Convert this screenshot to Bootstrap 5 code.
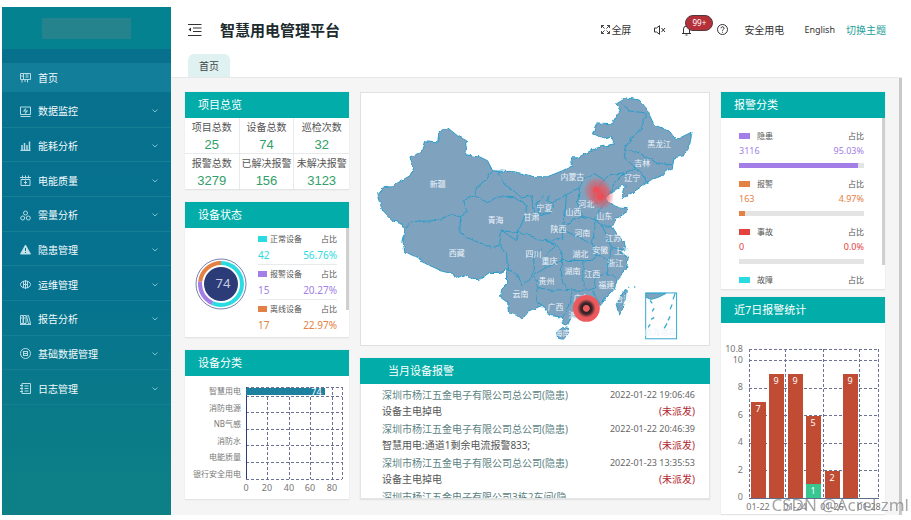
<!DOCTYPE html>
<html lang="zh-CN">
<head>
<meta charset="utf-8">
<meta name="viewport" content="width=device-width, initial-scale=1">
<title>智慧用电管理平台</title>
<link href="https://cdn.jsdelivr.net/npm/bootstrap@5.3.0/dist/css/bootstrap.min.css" rel="stylesheet">
<style>
:root{--teal:#02ada9;--cyan:#2bdbe2;--violet:#a27ee6;--orange:#e38043;--red:#e54141}
body{font-family:"Noto Sans","Noto Sans CJK SC",sans-serif;font-size:10px;line-height:16px;color:#555;background:#fff}
.shell{margin:7px 9px 6px 2px;min-height:calc(100vh - 13px)}
.side{flex:0 0 169px;background:linear-gradient(#07708d 0,#06728f 55%,#0a7b88 82%,#0d8186 100%)}
.brand-box{height:42px;background:#05828f}
.brand-plate{width:89px;height:21px;background:#25838d}
.side a{color:#f2fbfd;text-decoration:none;padding:0 13px 0 18px;gap:7px}
.side .home-link{height:29px;margin-top:14px;background:#137e99}
.menu{height:312px;display:grid;grid-auto-rows:1fr;margin:1px 0 0;padding:0;list-style:none}
.menu li{border-bottom:1px solid #167f96}
.side .menu a{padding-top:3px}
.side .ico{width:11px;height:11px;stroke:#b5dbe4;fill:none;stroke-width:1;flex:none}
.side .chev{width:6px;height:6px;stroke:#7fc0d0;fill:none;margin-left:auto}
.topbar{height:47px;padding:0 16px 2px 17px}
.topbar h1{font-size:15px;line-height:20px;font-weight:700;color:#1c2b2e;margin:0 0 0 18px}
.topbar .tool{background:none;border:0;padding:0;color:#333;font-size:10px;line-height:16px;text-decoration:none;display:inline-flex;align-items:center}
.topbar svg{stroke:#333;fill:none;stroke-width:1}
.topbar .full svg{margin-right:1px}
.topbar .mute{margin-left:23px}
.topbar .help{margin-left:26px}
.topbar .en{font-size:9px}
.topbar .theme-link{color:#1c9e98;margin-left:11px}
.count{position:absolute;left:3px;top:-9px;width:28px;height:16px;border:1px solid #55383c;border-radius:8px;background:#b5313a;color:#fff;font-size:8px;line-height:13px;text-align:center}
.tabs-line{height:24px;padding-left:17px;border-bottom:1px solid #e7e9e9}
.tab-home{width:42px;background:#dff1f1;border-radius:6px 6px 0 0;color:#444;text-decoration:none}
.board{background:#f5f5f5;padding:14px 14px 0 14px;gap:11px;border-right:3px solid #c9c9c9}
.side-col{flex:0 0 164px}
.left-col{gap:12px}
.right-col{gap:7px}
.mid-col{min-width:0}
.panel{background:#fff;border-bottom:1px solid #e3e5e5;box-shadow:0 0 1px #d8dcdc}
.panel h2{background:var(--teal);color:#fff;font-size:11px;line-height:26px;font-weight:400;margin:0;padding-left:13px}
.panel .wide-head{padding-left:28px}
.panel svg,.map-box svg{display:block;width:100%}
.stats>div{border-right:1px solid #e6eaea}
.stats>div:nth-child(3n){border-right:0}
.stats>div:nth-child(-n+3){border-bottom:1px solid #e6eaea}
.stats span{display:block;line-height:18px;white-space:nowrap}
.stats b{display:block;font:400 13px/17px "Liberation Sans",sans-serif;color:#31a069}
.status-body{height:109px;padding:2px 12px 0 10px}
.donut{flex:0 0 52px}
.legend-list{flex:1;margin-left:11px}
.legend-list>div{border-bottom:1px solid #e8ebeb;height:35px}
.legend-list>div:last-child{border:0}
.cap{font-size:8px;line-height:17px}
.num{font-size:10px;line-height:17px}
.chip{width:9px;height:6px;margin-right:3px}
.thumb{position:absolute;right:0;top:0;width:3px;background:#cfcfcf}
.c-cyan{color:var(--cyan)}.c-violet{color:var(--violet)}.c-orange{color:var(--orange)}.c-red{color:var(--red)}
.b-cyan{background:var(--cyan)}.b-violet{background:var(--violet)}.b-orange{background:var(--orange)}.b-red{background:var(--red)}
.kinds{height:171px;padding:11px 21px 0 18px}
.kinds .cap{line-height:14px}
.kinds .num{font-size:9px;line-height:16px}
.kinds .chip{width:11px;margin-right:7px}
.kinds .progress{height:5px;margin:4px 0 9px;border-radius:0;background:#e4e4e4}
.kinds-thumb{height:147px}
.map-box{background:#fff;border:1px solid #dfe1e1;margin-bottom:12px}
.alarms{height:115px;padding:3px 14px 0 21px;border:1px solid #e3e5e5;border-top:0}
.alarms>div{height:32px;margin-bottom:2px}
.alarms a{color:#5c8383;text-decoration:none}
.alarms time{font-size:9px;color:#666}
.alarms em{font-style:normal;color:#b3262f}
.axis text{font-size:9px;fill:#777}
.axis .zh text{font-size:8px}
.axis .vals text,.axis .bar-val{fill:#fff}
.grid-lines{stroke:#6d7193;stroke-width:1;stroke-dasharray:3 2;fill:none}
.names text{font-size:8px;fill:#eef4fa;text-anchor:middle}
.wm{position:absolute;right:2px;bottom:5px;font-size:17px;line-height:22px;color:#777;opacity:.65;white-space:nowrap}
</style>
</head>
<body>
<div class="position-relative overflow-hidden">
<div class="shell d-flex">
<nav class="side" aria-label="主菜单">
  <div class="brand-box d-flex align-items-center justify-content-center"><div class="brand-plate"></div></div>
  <a class="home-link d-flex align-items-center" href="#"><svg class="ico" viewBox="0 0 11 11"><path d="M.5 1.500h10v6H.5zM3.500 1.500v6M5.500 3h3M5.500 5h3M2 7.500v3M5 8v2M7.500 7.500v3M1 4h2"/></svg>首页</a>
  <ul class="menu">
    <li class="d-flex"><a class="d-flex flex-fill align-items-center" href="#"><svg class="ico" viewBox="0 0 11 11"><path d="M.5 1h10v7.500H.5zM.5 10.500h10"/><path d="M6 2.500 4 5h3L5 7.500" stroke-width="1.200"/></svg>数据监控<svg class="chev" viewBox="0 0 6 6"><path d="M.5 1.500 3 4l2.500-2.500"/></svg></a></li>
    <li class="d-flex"><a class="d-flex flex-fill align-items-center" href="#"><svg class="ico" viewBox="0 0 11 11"><path d="M.5 10.500h10M2 10V5M4.500 10V3M7 10V5M9.500 10V1.500" stroke-width="1.500"/></svg>能耗分析<svg class="chev" viewBox="0 0 6 6"><path d="M.5 1.500 3 4l2.500-2.500"/></svg></a></li>
    <li class="d-flex"><a class="d-flex flex-fill align-items-center" href="#"><svg class="ico" viewBox="0 0 11 11"><path d="M1 4.500h9v6H1zM0 2.500h11M2.500.5v3M5.500.5v3M8.500.5v3M5.500 5.500v4M4 7.500h3"/></svg>电能质量<svg class="chev" viewBox="0 0 6 6"><path d="M.5 1.500 3 4l2.500-2.500"/></svg></a></li>
    <li class="d-flex"><a class="d-flex flex-fill align-items-center" href="#"><svg class="ico" viewBox="0 0 11 11"><circle cx="5.500" cy="3" r="2"/><circle cx="2.700" cy="8" r="2"/><circle cx="8.300" cy="8" r="2"/></svg>需量分析<svg class="chev" viewBox="0 0 6 6"><path d="M.5 1.500 3 4l2.500-2.500"/></svg></a></li>
    <li class="d-flex"><a class="d-flex flex-fill align-items-center" href="#"><svg class="ico" viewBox="0 0 11 11"><path d="M5.500 1 10.500 10H.5z" fill="#c8e4ea"/><path d="M5.500 4v3M5.500 8v1" stroke="#07708d"/></svg>隐患管理<svg class="chev" viewBox="0 0 6 6"><path d="M.5 1.500 3 4l2.500-2.500"/></svg></a></li>
    <li class="d-flex"><a class="d-flex flex-fill align-items-center" href="#"><svg class="ico" viewBox="0 0 11 11"><ellipse cx="5.500" cy="5.500" rx="5" ry="3.500"/><path d="M5.500 1v9M3.500 2v7M7.500 2v7M3 5.500h5"/></svg>运维管理<svg class="chev" viewBox="0 0 6 6"><path d="M.5 1.500 3 4l2.500-2.500"/></svg></a></li>
    <li class="d-flex"><a class="d-flex flex-fill align-items-center" href="#"><svg class="ico" viewBox="0 0 11 11"><path d="M.5 1.500h2.500v8H.5zM3.500 1.500H6v8H3.500zM6.500 2l2-.5 2 8-2 .5zM0 10.500h11M1 4h1M4 4h1"/></svg>报告分析<svg class="chev" viewBox="0 0 6 6"><path d="M.5 1.500 3 4l2.500-2.500"/></svg></a></li>
    <li class="d-flex"><a class="d-flex flex-fill align-items-center" href="#"><svg class="ico" viewBox="0 0 11 11"><circle cx="5.500" cy="5.500" r="5"/><path d="M3 3.500h5M3.500 5.500h4M3.500 7.500h4M3.500 3v5M7.500 3v5"/></svg>基础数据管理<svg class="chev" viewBox="0 0 6 6"><path d="M.5 1.500 3 4l2.500-2.500"/></svg></a></li>
    <li class="d-flex"><a class="d-flex flex-fill align-items-center" href="#"><svg class="ico" viewBox="0 0 11 11"><path d="M2 .5h8.500v10H2zM0 2.500h3M0 5.500h3M0 8.500h3M4.500 3h4M4.500 5.500h4M4.500 8h4"/></svg>日志管理<svg class="chev" viewBox="0 0 6 6"><path d="M.5 1.500 3 4l2.500-2.500"/></svg></a></li>
  </ul>
</nav>

<div class="d-flex flex-column flex-fill">
<header>
  <div class="topbar d-flex align-items-center">
    <button class="tool" aria-label="收起菜单"><svg width="14" height="12" viewBox="0 0 14 12"><path d="M0 .5h13.500M5 4h8.500M5 7.500h8.500M0 11.500h13.500" stroke-width="1.200"/><path d="M3 3.500v4L.5 5.500z" fill="#333" stroke="none"/></svg></button>
    <h1>智慧用电管理平台</h1>
    <div class="ms-auto d-flex align-items-center">
      <button class="tool full"><svg width="9" height="9" viewBox="0 0 9 9"><path d="M.5 3V.5H3M.5.5l3 3M6 .5h2.500V3M8.500.5l-3 3M.5 6v2.500H3M.5 8.500l3-3M8.500 6v2.500H6M8.500 8.500l-3-3" stroke-width=".9"/></svg>全屏</button>
      <button class="tool mute" aria-label="静音"><svg width="12" height="10" viewBox="0 0 12 10"><path d="M.5 3h2L5.500.7v8.600L2.500 7h-2zM7.500 3l3.500 4M11 3 7.500 7"/></svg></button>
      <button class="tool position-relative ms-3" aria-label="通知"><svg width="9" height="12" viewBox="0 0 9 12"><path d="M0 9.500h9M1.500 9.500V5a3 3 0 0 1 6 0v4.500M3.500 11h2M4.500 2V1"/></svg><span class="count">99+</span></button>
      <button class="tool help" aria-label="帮助"><svg width="11" height="11" viewBox="0 0 11 11"><circle cx="5.500" cy="5.500" r="5"/><path d="M4 4.300a1.500 1.500 0 1 1 2.200 1.300q-.7.300-.7 1.200M5.500 7.800v.9"/></svg></button>
      <a class="tool ms-3" href="#">安全用电</a>
      <a class="tool ms-3 ps-1 en" href="#">English</a>
      <a class="tool theme-link" href="#">切换主题</a>
    </div>
  </div>
  <div class="tabs-line d-flex"><a class="tab-home d-flex align-items-center justify-content-center" href="#">首页</a></div>
</header>

<main class="board d-flex flex-fill">
  <div class="side-col left-col d-flex flex-column">
    <section class="panel">
      <h2>项目总览</h2>
      <div class="stats row row-cols-3 g-0 text-center">
        <div><span>项目总数</span><b>25</b></div><div><span>设备总数</span><b>74</b></div><div><span>巡检次数</span><b>32</b></div>
        <div><span>报警总数</span><b>3279</b></div><div><span>已解决报警</span><b>156</b></div><div><span>未解决报警</span><b>3123</b></div>
      </div>
    </section>
    <section class="panel">
      <h2>设备状态</h2>
      <div class="status-body position-relative d-flex align-items-start">
        <div class="donut align-self-center"><svg viewBox="0 0 52 52">
          <circle cx="26" cy="26" r="25" fill="none" stroke="#7780b0" stroke-width="1"/>
          <g fill="none" stroke-width="4" transform="rotate(-90 26 26)">
            <circle cx="26" cy="26" r="21" pathLength="100" stroke="#2bdbe2" stroke-dasharray="56.760 100"/>
            <circle cx="26" cy="26" r="21" pathLength="100" stroke="#a27ee6" stroke-dasharray="20.270 100" stroke-dashoffset="-56.760"/>
            <circle cx="26" cy="26" r="21" pathLength="100" stroke="#e38043" stroke-dasharray="22.970 100" stroke-dashoffset="-77.030"/>
          </g>
          <circle cx="26" cy="26" r="17" fill="#2c3c78"/>
          <text x="28" y="30" font-size="13" fill="#c6cce2" text-anchor="middle">74</text></svg></div>
        <div class="legend-list">
          <div><div class="cap d-flex align-items-center"><i class="chip b-cyan"></i>正常设备<span class="ms-auto">占比</span></div><div class="num c-cyan d-flex justify-content-between"><span>42</span><span>56.76%</span></div></div>
          <div><div class="cap d-flex align-items-center"><i class="chip b-violet"></i>报警设备<span class="ms-auto">占比</span></div><div class="num c-violet d-flex justify-content-between"><span>15</span><span>20.27%</span></div></div>
          <div><div class="cap d-flex align-items-center"><i class="chip b-orange"></i>离线设备<span class="ms-auto">占比</span></div><div class="num c-orange d-flex justify-content-between"><span>17</span><span>22.97%</span></div></div>
        </div>
        <span class="thumb h-75"></span>
      </div>
    </section>
    <section class="panel">
      <h2>设备分类</h2>
      <svg class="axis" viewBox="186 376 164 123" role="img" aria-label="设备分类柱状图">
        <path class="grid-lines" d="M247 387.500h96M247 396.500h96M247 412.500h96M247 429.500h96M247 445.500h96M247 462.500h96M247 479.500h96M268.500 387v92M290.500 387v92M311.500 387v92M333.500 387v92M343.500 387v92"/>
        <path d="M247.500 387v92" stroke="#2d3d70"/>
        <rect x="247" y="388" width="79" height="7" fill="#1d809f"/>
        <text class="bar-val" x="317.500" y="395" text-anchor="middle">74</text>
        <g class="zh" text-anchor="end"><text x="242" y="394">智慧用电</text><text x="242" y="411">消防电源</text><text x="242" y="427">NB气感</text><text x="242" y="444">消防水</text><text x="242" y="460">电能质量</text><text x="242" y="477">银行安全用电</text></g>
        <g text-anchor="middle"><text x="247" y="491">0</text><text x="268" y="491">20</text><text x="290" y="491">40</text><text x="311" y="491">60</text><text x="333" y="491">80</text></g>
      </svg>
    </section>
  </div>

  <div class="mid-col flex-fill">
    <section class="map-box">
      <svg viewBox="361 93 349 253" role="img" aria-label="全国设备分布">
        <defs>
          <filter id="coast" x="0" y="0" width="1" height="1"><feTurbulence type="fractalNoise" baseFrequency=".18" numOctaves="2" seed="4"/><feDisplacementMap in="SourceGraphic" scale="4" xChannelSelector="R" yChannelSelector="G"/></filter>
          <radialGradient id="hot"><stop offset="0" stop-color="#ee5b5f"/><stop offset=".22" stop-color="#ee5b5f"/><stop offset=".28" stop-color="#2e2226"/><stop offset=".42" stop-color="#3a2629"/><stop offset=".68" stop-color="#e9585c"/><stop offset="1" stop-color="#ee5b5f"/></radialGradient>
          <radialGradient id="glow"><stop offset="0" stop-color="#e84850" stop-opacity=".85"/><stop offset=".6" stop-color="#e05a66" stop-opacity=".6"/><stop offset="1" stop-color="#ee5b5f" stop-opacity=".15"/></radialGradient>
        </defs>
        <g fill="#7fa2be" stroke="#2a9dc9" stroke-width="1" stroke-linejoin="round" filter="url(#coast)">
          <path d="M377 195l6-7 9-1 6-4 12-7 4-8-4-11 12-4 4-12 12 1 1-9 9-5 10 8 7 4 2 8-1 7 14 2 8 4 5 10 22 1 20 5 13 0 15-6 10-5-1-8 6 0 19-10 18-4-3-8-7 2-12-4 5-11 15 1 8-13-4-7 10-6 13 2 7 8 8 17 15 6 7 9 16-8-3 16-6 8-9 2-2 12-5-2-5 8-11 4-7 5-12 8-10 6 3-13-4 0-10 7-6 4 4 6 7 4 12 1-2 5-10 6-4 8 5 8 7 8 2 8-5 2 7 5-2 12-9 10-3 10-7 6-7 9-14 11-15 2-4 8-4-1-1-7-13-2-7-10-10 4-5 2-6 8-5-4-8-3-1-10-7-5 1-8 5-5 0-15-6 3-11 0-10 7-8 0-7-5-9 4-3-5-10-2-13-6-13-8-12-6-2-10 2-8-3-10-10-3-9-9z"/>
          <path d="M625 291l-8 14 3 11 4-7 2-10 1-7zM557 332l6-4 6 1 0 5-5 6-6-1z"/>
          <g fill="none">
            <path d="M405 229l7-7 23-1 17-6 9 2 6-6-4-10 12-5 2-8 10-9 6-8M475 196l13 7 10-6 17 1 12 8-1 10-8 17-1 8-15-10-2 14M461 217l-1 16 12 7 21 8 7-3 7 10 1 15 7 3 8 13 9-8 3-8M498 171l7 14 8 5 9 8 10-2 1 9 4 12M502 231l16 2 12 2 7 5 8 1 17-1M543 196l-6 9 3 11 12-3 2-8-6-3 2-6M550 205l17-10-2 26-3 19M567 195l13-7-2 15 4 13-15 9"/>
            <path d="M580 188l5-10 10-4 10 6 5-5 15-2M605 180l-7 8 8 10 6-6M596 190l-2 10 8 5M611 193l4-10 10-10 12-5 8 10 4 5M625 150l2 10 10 8M625 150l15 3 17 10 16 2M622 103l8 8 17 2-5 15-12 13-5 9"/>
            <path d="M582 216l14 4 2-7 8-10M597 221l7 5 9 1M565 231l15 7 13 7 2-14 2-10M545 241l12 4 6 10-1 6 18 0 13 0 4-6-4-10M603 226l4 9 5 13-2 12-13-4M612 248l13 2M610 260l-2 15 9 3M585 261l-2 14 4 16 8-2 2-11 11-5M593 291l8 14M562 261l0 17 6 12 17 1M557 245l-12 13 2 10 15-7M547 268l-12 7 3 13 14 3 16-1M538 288l-2 13 7 5M573 291l-3 17-7 10M535 270l-1-14 8-6"/>
          </g>
        </g>
        <g stroke="#36a9cd" fill="none"><rect x="646.500" y="293.500" width="31" height="46" stroke-width="1"/><path d="M647 294h20l-8 4-7 2-5-2z" fill="#7fa2be"/><path d="M674 300l2-6M671 310l2-5M669 321l2-4M665 329l3-5M651 301l2 3M653 312l2-3M652 320l3-2M649 328l2-3M629 288h1M635 287l1 1" stroke-width="1.300"/></g>
        <g class="names"><text x="438" y="187">新疆</text><text x="496" y="223">青海</text><text x="457" y="256">西藏</text><text x="532" y="220">甘肃</text><text x="534" y="257">四川</text><text x="521" y="298">云南</text><text x="573" y="180">内蒙古</text><text x="545" y="211">宁夏</text><text x="587" y="207">河北</text><text x="574" y="215">山西</text><text x="605" y="219">山东</text><text x="559" y="232">陕西</text><text x="583" y="236">河南</text><text x="614" y="241">江苏</text><text x="581" y="257">湖北</text><text x="601" y="253">安徽</text><text x="623" y="254">上海</text><text x="550" y="265">重庆</text><text x="573" y="275">湖南</text><text x="593" y="278">江西</text><text x="616" y="267">浙江</text><text x="547" y="285">贵州</text><text x="607" y="289">福建</text><text x="624" y="303">台湾</text><text x="582" y="302">广东</text><text x="556" y="311">广西</text><text x="577" y="319">澳门</text><text x="563" y="337">海南</text><text x="661" y="336">南海诸岛</text><text x="660" y="147">黑龙江</text><text x="643" y="166">吉林</text><text x="633" y="181">辽宁</text></g>
        <circle cx="598" cy="191" r="13" fill="url(#glow)"/><circle cx="602" cy="197" r="12" fill="url(#glow)"/>
        <circle cx="597" cy="190" r="3" fill="#ee4d55"/><circle cx="601" cy="197" r="3" fill="#ee4d55"/>
        <circle cx="587" cy="309" r="13.500" fill="url(#hot)"/>
      </svg>
    </section>
    <section class="panel">
      <h2 class="wide-head">当月设备报警</h2>
      <div class="alarms overflow-hidden">
        <div><div class="d-flex justify-content-between"><a href="#">深圳市杨江五金电子有限公司总公司(隐患)</a><time>2022-01-22 19:06:46</time></div><div class="d-flex justify-content-between"><span>设备主电掉电</span><em>(未派发)</em></div></div>
        <div><div class="d-flex justify-content-between"><a href="#">深圳市杨江五金电子有限公司总公司(隐患)</a><time>2022-01-22 20:46:39</time></div><div class="d-flex justify-content-between"><span>智慧用电:通道1剩余电流报警833;</span><em>(未派发)</em></div></div>
        <div><div class="d-flex justify-content-between"><a href="#">深圳市杨江五金电子有限公司总公司(隐患)</a><time>2022-01-23 13:35:53</time></div><div class="d-flex justify-content-between"><span>设备主电掉电</span><em>(未派发)</em></div></div>
        <div><a href="#">深圳市杨江五金电子有限公司3栋2车间(隐</a></div>
      </div>
    </section>
  </div>

  <div class="side-col right-col d-flex flex-column">
    <section class="panel">
      <h2>报警分类</h2>
      <div class="kinds position-relative overflow-hidden">
        <div class="cap d-flex align-items-center"><i class="chip b-violet"></i>隐患<span class="ms-auto">占比</span></div><div class="num c-violet d-flex justify-content-between"><span>3116</span><span>95.03%</span></div><div class="progress"><div class="progress-bar b-violet" style="width:95.03%"></div></div>
        <div class="cap d-flex align-items-center"><i class="chip b-orange"></i>报警<span class="ms-auto">占比</span></div><div class="num c-orange d-flex justify-content-between"><span>163</span><span>4.97%</span></div><div class="progress"><div class="progress-bar b-orange" style="width:4.97%"></div></div>
        <div class="cap d-flex align-items-center"><i class="chip b-red"></i>事故<span class="ms-auto">占比</span></div><div class="num c-red d-flex justify-content-between"><span>0</span><span>0.0%</span></div><div class="progress"><div class="progress-bar b-red" style="width:0%"></div></div>
        <div class="cap d-flex align-items-center"><i class="chip b-cyan"></i>故障<span class="ms-auto">占比</span></div>
        <span class="thumb kinds-thumb"></span>
      </div>
    </section>
    <section class="panel flex-fill">
      <h2>近7日报警统计</h2>
      <svg class="axis" viewBox="721 322 164 191" role="img" aria-label="近7日报警统计图">
        <path class="grid-lines" d="M749 348.500h130M749 359.500h130M749 387.500h130M749 414.500h130M749 442.500h130M749 469.500h130M749.500 348v149M785.500 348v149M823.500 348v149M859.500 348v149M878.500 348v149"/>
        <path d="M749 497.500h130" stroke="#5f6d8d"/>
        <g fill="#c14c34"><rect x="751" y="401" width="15" height="96"/><rect x="769" y="373" width="15" height="124"/><rect x="788" y="373" width="15" height="124"/><rect x="806" y="415" width="15" height="69"/><rect x="825" y="470" width="15" height="27"/><rect x="843" y="373" width="15" height="124"/></g>
        <rect x="806" y="483" width="15" height="14" fill="#38c790"/>
        <g text-anchor="end"><text x="743" y="351">10.8</text><text x="743" y="362">10</text><text x="743" y="389">8</text><text x="743" y="417">6</text><text x="743" y="444">4</text><text x="743" y="472">2</text><text x="743" y="499">0</text></g>
        <g text-anchor="middle"><text x="758" y="509">01-22</text><text x="795" y="509">01-24</text><text x="832" y="509">01-26</text><text x="869" y="509">01-28</text></g>
        <g class="vals" text-anchor="middle"><text x="758" y="411">7</text><text x="776" y="383">9</text><text x="795" y="383">9</text><text x="813" y="425">5</text><text x="813" y="493">1</text><text x="832" y="480">2</text><text x="850" y="383">9</text></g>
      </svg>
    </section>
  </div>
</main>
</div>
</div>
<div class="wm">CSDN @Acrel zml</div>
</div>
<script src="https://cdn.jsdelivr.net/npm/bootstrap@5.3.0/dist/js/bootstrap.bundle.min.js"></script>
</body>
</html>
